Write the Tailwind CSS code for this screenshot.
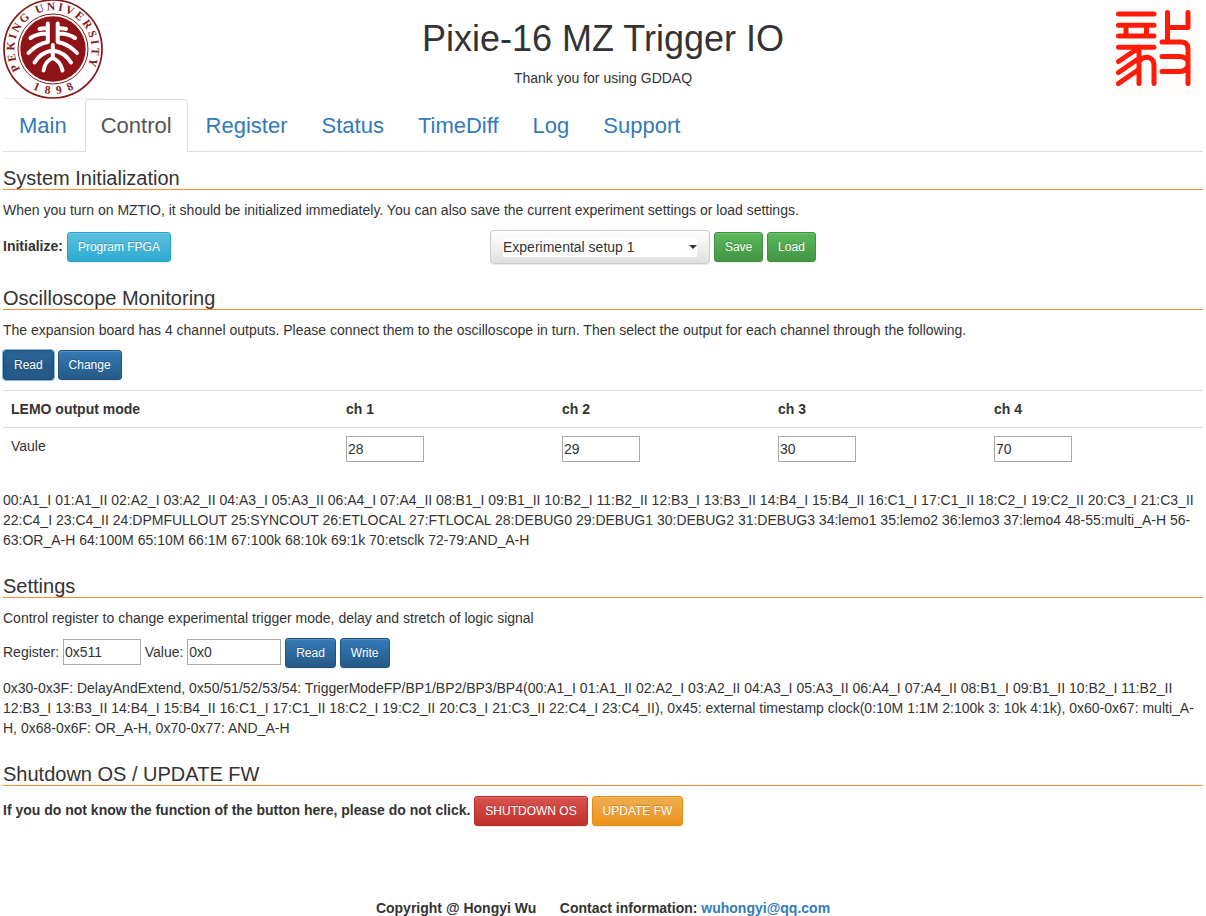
<!DOCTYPE html>
<html lang="en">
<head>
<meta charset="utf-8">
<title>Pixie-16 MZ Trigger IO</title>
<script src="https://cdn.jsdelivr.net/npm/@tailwindcss/browser@4"></script>
</head>
<body class="h-[916px] overflow-hidden bg-white px-[3px] font-['Liberation_Sans',Arial,sans-serif] text-[14px] leading-[20px] text-[#333]">
<header class="flex h-[99px] justify-between">
  <svg class="-mt-px h-[100px] w-[100px] shrink-0" viewBox="0 0 100 100">
    <path d="M0 99.5H100" stroke="#eee"/>
    <circle cx="50" cy="50" r="49" fill="#fff" stroke="#85181b" stroke-width="1.7"/>
    <circle cx="50" cy="50" r="35" fill="#fff" stroke="#85181b" stroke-width="1"/>
    <circle cx="50" cy="50" r="32.7" fill="#901317"/>
    <g fill="none" stroke="#fff" stroke-width="4" stroke-linecap="round" stroke-linejoin="round">
      <path d="M44.800 24.500V43Q34 45 25.500 54M44 29.500Q40 29 36.500 30M44 34.500Q34 34.500 27.500 39"/>
      <path d="M54.700 24.500V43Q65.500 45 74 54M55.500 29.500Q59.500 29 63 30M55.500 34.500Q65.500 34.500 72 39"/>
      <path d="M49.800 46V59M49.800 51.500Q38 53 31.500 63.500M49.800 51.500Q61.500 53 68 63.500M40.500 71.500Q42 62 49.800 59Q57.500 62 59.500 71.500"/>
    </g>
    <path id="ringTop" d="M18.500 72A38.500 38.500 0 1 1 81.500 72" fill="none"/>
    <path id="ringBottom" d="M18.200 81.800A45 45 0 0 0 81.800 81.800" fill="none"/>
    <g fill="#85181b" font-family="Liberation Serif, serif" font-weight="700" font-size="11.500">
      <text><textPath href="#ringTop" startOffset="2" textLength="159">PEKING UNIVERSITY</textPath></text>
      <text><textPath href="#ringBottom" startOffset="14" textLength="43">1898</textPath></text>
    </g>
  </svg>
  <div class="text-center">
    <h1 class="mt-[19px] text-[36px] leading-[39px]">Pixie-16 MZ Trigger IO</h1>
    <p class="mt-[10px]">Thank you for using GDDAQ</p>
  </div>
  <svg class="h-[99px] w-[100px] shrink-0" viewBox="0 0 100 99">
    <rect x="4" y="1" width="92" height="96" fill="#fffefd"/>
    <g fill="none" stroke="#ff1a0a" stroke-width="5" stroke-linecap="round" stroke-linejoin="round">
      <path d="M15.500 14H51M15.500 25.300H51M15.500 36H51M15.500 47.200H51M23 26V35M43.500 26V35"/>
      <path d="M36 47V83.500M34 49L15.500 61.500M35 59L15.500 72.500M35 70L15.500 83.500M37 60Q42 56 47 58Q51 60 51 66V83.500"/>
      <path d="M64.500 12.500V41M66 27.500H85V12.500M59 42H78Q85 42 85 49V83.500M59 56.500H76Q83 57 85 61M59 71.500H77Q83 71 85 66"/>
    </g>
  </svg>
</header>
<nav class="flex h-[53px] gap-[2px] border-b border-[#ddd] text-[22px] leading-[31px] text-[#337ab7]">
  <a class="px-4 pt-[11px]">Main</a>
  <a class="z-10 h-[53px] rounded-t-[4px] border border-b-0 border-[#ddd] bg-white px-[15px] pt-[10px] text-[#555]">Control</a>
  <a class="px-4 pt-[11px]">Register</a>
  <a class="px-4 pt-[11px]">Status</a>
  <a class="px-4 pt-[11px]">TimeDiff</a>
  <a class="px-4 pt-[11px]">Log</a>
  <a class="px-4 pt-[11px]">Support</a>
</nav>
<main>
  <section class="h-[120px] pt-[15px]">
    <h2 class="h-[23px] border-b border-[#ff8c32] text-[20px] leading-[22px]">System Initialization</h2>
    <p class="mt-[10px]">When you turn on MZTIO, it should be initialized immediately. You can also save the current experiment settings or load settings.</p>
    <div class="mt-[10px] flex h-[34px]">
      <div class="flex w-[487px] gap-1 pt-[2px]">
        <b class="pt-[4px]">Initialize:</b>
        <button class="h-[30px] rounded-[3px] border border-[#28a4c9] bg-linear-to-b from-[#5bc0de] to-[#2aabd2] px-[10px] text-[12px] leading-[18px] text-white shadow-[inset_0_1px_0_rgba(255,255,255,.15),0_1px_1px_rgba(0,0,0,.075)] [text-shadow:0_-1px_0_rgba(0,0,0,.2)]">Program FPGA</button>
      </div>
      <div class="flex items-center gap-[3.890px]">
        <div class="flex h-[34px] w-[220px] items-center rounded-[4px] border border-[#ccc] bg-linear-to-b from-white to-[#e0e0e0] px-[12px] shadow-[inset_0_1px_0_rgba(255,255,255,.15),0_1px_1px_rgba(0,0,0,.075)]">
          <div class="flex h-[20px] w-full items-center justify-between bg-white"><span>Experimental setup 1</span><svg class="h-1 w-2" viewBox="0 0 8 4"><path d="M0 0H8L4 4Z" fill="#333"/></svg></div>
        </div>
        <button class="h-[30px] rounded-[3px] border border-[#3e8f3e] bg-linear-to-b from-[#5cb85c] to-[#419641] px-[10px] text-[12px] leading-[18px] text-white shadow-[inset_0_1px_0_rgba(255,255,255,.15),0_1px_1px_rgba(0,0,0,.075)] [text-shadow:0_-1px_0_rgba(0,0,0,.2)]">Save</button>
        <button class="h-[30px] rounded-[3px] border border-[#3e8f3e] bg-linear-to-b from-[#5cb85c] to-[#419641] px-[10px] text-[12px] leading-[18px] text-white shadow-[inset_0_1px_0_rgba(255,255,255,.15),0_1px_1px_rgba(0,0,0,.075)] [text-shadow:0_-1px_0_rgba(0,0,0,.2)]">Load</button>
      </div>
    </div>
  </section>
  <section class="h-[288px] pt-[15px]">
    <h2 class="h-[23px] border-b border-[#ff8c32] text-[20px] leading-[22px]">Oscilloscope Monitoring</h2>
    <p class="mt-[10px]">The expansion board has 4 channel outputs. Please connect them to the oscilloscope in turn. Then select the output for each channel through the following.</p>
    <div class="mt-[10px] flex gap-[3.890px]">
      <button class="h-[30px] rounded-[3px] border border-[#204d74] bg-linear-to-b from-[#2d6ca2] to-[#265a88] to-50% px-[10px] text-[12px] leading-[18px] text-white shadow-[inset_0_3px_5px_rgba(0,0,0,.125),0_0_0_1px_#8db9e8] [text-shadow:0_-1px_0_rgba(0,0,0,.2)]">Read</button>
      <button class="h-[30px] rounded-[3px] border border-[#245580] bg-linear-to-b from-[#337ab7] to-[#265a88] px-[10px] text-[12px] leading-[18px] text-white shadow-[inset_0_1px_0_rgba(255,255,255,.15),0_1px_1px_rgba(0,0,0,.075)] [text-shadow:0_-1px_0_rgba(0,0,0,.2)]">Change</button>
    </div>
    <div class="mt-[10px] grid h-[37px] grid-cols-[335px_216px_216px_216px_1fr] border-t border-[#ddd] pt-[8px] pl-[8px] font-bold">
      <span>LEMO output mode</span><span>ch 1</span><span>ch 2</span><span>ch 3</span><span>ch 4</span>
    </div>
    <div class="grid h-[63px] grid-cols-[335px_216px_216px_216px_1fr] border-t border-[#ddd] pt-[8px] pl-[8px]">
      <span>Vaule</span>
      <input class="h-[26px] w-[78px] border border-[#a9a9a9] px-px" value="28">
      <input class="h-[26px] w-[78px] border border-[#a9a9a9] px-px" value="29">
      <input class="h-[26px] w-[78px] border border-[#a9a9a9] px-px" value="30">
      <input class="h-[26px] w-[78px] border border-[#a9a9a9] px-px" value="70">
    </div>
    <p class="[word-spacing:0.04px]">00:A1_I 01:A1_II 02:A2_I 03:A2_II 04:A3_I 05:A3_II 06:A4_I 07:A4_II 08:B1_I 09:B1_II 10:B2_I 11:B2_II 12:B3_I 13:B3_II 14:B4_I 15:B4_II 16:C1_I 17:C1_II 18:C2_I 19:C2_II 20:C3_I 21:C3_II 22:C4_I 23:C4_II 24:DPMFULLOUT 25:SYNCOUT 26:ETLOCAL 27:FTLOCAL 28:DEBUG0 29:DEBUG1 30:DEBUG2 31:DEBUG3 34:lemo1 35:lemo2 36:lemo3 37:lemo4 48-55:multi_A-H 56-63:OR_A-H 64:100M 65:10M 66:1M 67:100k 68:10k 69:1k 70:etsclk 72-79:AND_A-H</p>
  </section>
  <section class="h-[188px] pt-[15px]">
    <h2 class="h-[23px] border-b border-[#ff8c32] text-[20px] leading-[22px]">Settings</h2>
    <p class="mt-[10px]">Control register to change experimental trigger mode, delay and stretch of logic signal</p>
    <div class="mt-[10px] flex h-[30px] gap-[3.890px]">
      <span class="pt-[4px]">Register:</span>
      <input class="mt-px h-[26px] w-[78px] border border-[#a9a9a9] px-px" value="0x511">
      <span class="pt-[4px]">Value:</span>
      <input class="mt-px h-[26px] w-[94px] border border-[#a9a9a9] px-px" value="0x0">
      <button class="h-[30px] rounded-[3px] border border-[#245580] bg-linear-to-b from-[#337ab7] to-[#265a88] px-[10px] text-[12px] leading-[18px] text-white shadow-[inset_0_1px_0_rgba(255,255,255,.15),0_1px_1px_rgba(0,0,0,.075)] [text-shadow:0_-1px_0_rgba(0,0,0,.2)]">Read</button>
      <button class="h-[30px] rounded-[3px] border border-[#245580] bg-linear-to-b from-[#337ab7] to-[#265a88] px-[10px] text-[12px] leading-[18px] text-white shadow-[inset_0_1px_0_rgba(255,255,255,.15),0_1px_1px_rgba(0,0,0,.075)] [text-shadow:0_-1px_0_rgba(0,0,0,.2)]">Write</button>
    </div>
    <p class="mt-[10px] [word-spacing:0.04px]">0x30-0x3F: DelayAndExtend, 0x50/51/52/53/54: TriggerModeFP/BP1/BP2/BP3/BP4(00:A1_I 01:A1_II 02:A2_I 03:A2_II 04:A3_I 05:A3_II 06:A4_I 07:A4_II 08:B1_I 09:B1_II 10:B2_I 11:B2_II 12:B3_I 13:B3_II 14:B4_I 15:B4_II 16:C1_I 17:C1_II 18:C2_I 19:C2_II 20:C3_I 21:C3_II 22:C4_I 23:C4_II), 0x45: external timestamp clock(0:10M 1:1M 2:100k 3: 10k 4:1k), 0x60-0x67: multi_A-H, 0x68-0x6F: OR_A-H, 0x70-0x77: AND_A-H</p>
  </section>
  <section class="h-[150px] pt-[15px]">
    <h2 class="h-[23px] border-b border-[#ff8c32] text-[20px] leading-[22px]">Shutdown OS / UPDATE FW</h2>
    <div class="mt-[10px] flex gap-[3.890px]">
      <b class="pt-[4px]">If you do not know the function of the button here, please do not click.</b>
      <button class="h-[30px] rounded-[3px] border border-[#b92c28] bg-linear-to-b from-[#d9534f] to-[#c12e2a] px-[10px] text-[12px] leading-[18px] text-white shadow-[inset_0_1px_0_rgba(255,255,255,.15),0_1px_1px_rgba(0,0,0,.075)] [text-shadow:0_-1px_0_rgba(0,0,0,.2)]">SHUTDOWN OS</button>
      <button class="h-[30px] rounded-[3px] border border-[#e38d13] bg-linear-to-b from-[#f0ad4e] to-[#eb9316] px-[10px] text-[12px] leading-[18px] text-white shadow-[inset_0_1px_0_rgba(255,255,255,.15),0_1px_1px_rgba(0,0,0,.075)] [text-shadow:0_-1px_0_rgba(0,0,0,.2)]">UPDATE FW</button>
    </div>
  </section>
</main>
<footer class="flex justify-center font-bold"><span class="mr-[23.500px]">Copyright @ Hongyi Wu</span><span>Contact information: <a class="text-[#337ab7]">wuhongyi@qq.com</a></span></footer>
</body>
</html>
